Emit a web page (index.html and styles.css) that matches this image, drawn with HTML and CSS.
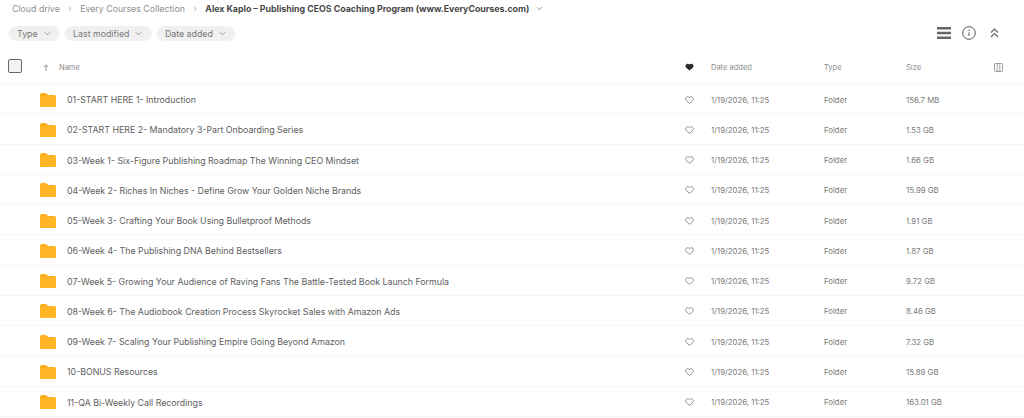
FILE: index.html
```html
<!DOCTYPE html>
<html lang="en">
<head>
    <meta charset="UTF-8">
    <meta name="viewport" content="width=device-width, initial-scale=1.0">
    <link rel="stylesheet" href="styles.css">
</head>
<body>
    <svg class="defs" width="0" height="0">
        <symbol id="folder" viewBox="0 0 16 14">
            <path d="M0 2C0 .9.8 0 1.800 0h3.600c.5 0 .9.200 1.200.5L8 2h6.200c1 0 1.800.8 1.800 1.800v8.400c0 1-.8 1.800-1.800 1.800H1.800C.8 14 0 13.200 0 12.200Z" fill="#fdb022"/>
            <path d="M0 4.500C0 3.700.7 3 1.500 3h13c.8 0 1.500.7 1.500 1.500v7.700c0 1-.8 1.800-1.800 1.800H1.800C.8 14 0 13.200 0 12.200Z" fill="#ffb524"/>
        </symbol>
        <symbol id="heart" viewBox="0 0 10 9">
            <path d="M5 8.300 1.500 5.300C.2 4.100.4 1.900 2 1.100 3.100.6 4.300.9 5 1.800c.7-.9 1.900-1.200 3-.7 1.600.8 1.800 3 .5 4.200Z" fill="none" stroke="#777" stroke-width=".9"/>
        </symbol>
        <symbol id="chev" viewBox="0 0 8 5">
            <path d="M1 1 4 4 7 1" fill="none" stroke="#888" stroke-width="1"/>
        </symbol>
    </svg>

    <nav class="crumbs">
        <a href="#">Cloud drive</a>
        <span class="sep">&#8250;</span>
        <a href="#">Every Courses Collection</a>
        <span class="sep">&#8250;</span>
        <b>Alex Kaplo &#8211; Publishing CEOS Coaching Program (www.EveryCourses.com)</b>
        <svg class="chev crumb-chev"><use href="#chev"/></svg>
    </nav>

    <div class="toolbar">
        <div class="chip">Type <svg class="chev"><use href="#chev"/></svg></div>
        <div class="chip">Last modified <svg class="chev"><use href="#chev"/></svg></div>
        <div class="chip">Date added <svg class="chev"><use href="#chev"/></svg></div>
        <div class="tools">
            <svg class="stack" width="14" height="12" viewBox="0 0 14 12">
                <path d="M0 1.300h14M0 6h14M0 10.700h14" stroke="#666" stroke-width="2.600"/>
            </svg>
            <svg class="info" width="14" height="14" viewBox="0 0 14 14">
                <circle cx="7" cy="7" r="6.300" fill="none" stroke="#555" stroke-width="1"/>
                <path d="M7 6.300v3.600" stroke="#555" stroke-width="1"/>
                <circle cx="7" cy="4.300" r=".7" fill="#555"/>
            </svg>
            <svg class="collapse" width="9" height="10" viewBox="0 0 9 10">
                <path d="M1 4.500 4.500 1 8 4.500M1 9 4.500 5.500 8 9" fill="none" stroke="#666" stroke-width="1.100"/>
            </svg>
        </div>
    </div>

    <div class="row head">
        <div class="check"></div>
        <svg class="arrow" width="6" height="7" viewBox="0 0 6 7"><path d="M3 7V1M.7 3.200 3 1l2.300 2.200" fill="none" stroke="#888" stroke-width=".9"/></svg>
        <div class="name">Name</div>
        <svg class="heart" viewBox="0 0 10 9"><path d="M5 8.500 1.300 5.300C0 4 .3 1.800 1.900 1 3 .5 4.300.8 5 1.700 5.700.8 7 .5 8.100 1c1.600.8 1.900 3 .6 4.300Z" fill="#2b2b2b"/></svg>
        <div>Date added</div>
        <div>Type</div>
        <div>Size</div>
        <svg class="cols" width="9" height="9" viewBox="0 0 9 9"><rect x=".5" y=".5" width="8" height="8" rx="1" fill="none" stroke="#888" stroke-width=".8"/><path d="M3.200.5v8M5.800.5v8" stroke="#888" stroke-width=".8"/></svg>
    </div>

    <div class="row"><svg class="folder"><use href="#folder"/></svg><div class="name">01-START HERE 1- Introduction</div><svg class="heart"><use href="#heart"/></svg><div>1/19/2026, 11:25</div><div>Folder</div><div>156.7 MB</div></div>
    <div class="row"><svg class="folder"><use href="#folder"/></svg><div class="name">02-START HERE 2- Mandatory 3-Part Onboarding Series</div><svg class="heart"><use href="#heart"/></svg><div>1/19/2026, 11:25</div><div>Folder</div><div>1.53 GB</div></div>
    <div class="row"><svg class="folder"><use href="#folder"/></svg><div class="name">03-Week 1- Six-Figure Publishing Roadmap The Winning CEO Mindset</div><svg class="heart"><use href="#heart"/></svg><div>1/19/2026, 11:25</div><div>Folder</div><div>1.66 GB</div></div>
    <div class="row"><svg class="folder"><use href="#folder"/></svg><div class="name">04-Week 2- Riches In Niches - Define Grow Your Golden Niche Brands</div><svg class="heart"><use href="#heart"/></svg><div>1/19/2026, 11:25</div><div>Folder</div><div>15.99 GB</div></div>
    <div class="row"><svg class="folder"><use href="#folder"/></svg><div class="name">05-Week 3- Crafting Your Book Using Bulletproof Methods</div><svg class="heart"><use href="#heart"/></svg><div>1/19/2026, 11:25</div><div>Folder</div><div>1.91 GB</div></div>
    <div class="row"><svg class="folder"><use href="#folder"/></svg><div class="name">06-Week 4- The Publishing DNA Behind Bestsellers</div><svg class="heart"><use href="#heart"/></svg><div>1/19/2026, 11:25</div><div>Folder</div><div>1.87 GB</div></div>
    <div class="row"><svg class="folder"><use href="#folder"/></svg><div class="name">07-Week 5- Growing Your Audience of Raving Fans The Battle-Tested Book Launch Formula</div><svg class="heart"><use href="#heart"/></svg><div>1/19/2026, 11:25</div><div>Folder</div><div>9.72 GB</div></div>
    <div class="row"><svg class="folder"><use href="#folder"/></svg><div class="name">08-Week 6- The Audiobook Creation Process Skyrocket Sales with Amazon Ads</div><svg class="heart"><use href="#heart"/></svg><div>1/19/2026, 11:25</div><div>Folder</div><div>8.46 GB</div></div>
    <div class="row"><svg class="folder"><use href="#folder"/></svg><div class="name">09-Week 7- Scaling Your Publishing Empire Going Beyond Amazon</div><svg class="heart"><use href="#heart"/></svg><div>1/19/2026, 11:25</div><div>Folder</div><div>7.32 GB</div></div>
    <div class="row"><svg class="folder"><use href="#folder"/></svg><div class="name">10-BONUS Resources</div><svg class="heart"><use href="#heart"/></svg><div>1/19/2026, 11:25</div><div>Folder</div><div>15.89 GB</div></div>
    <div class="row"><svg class="folder"><use href="#folder"/></svg><div class="name">11-QA Bi-Weekly Call Recordings</div><svg class="heart"><use href="#heart"/></svg><div>1/19/2026, 11:25</div><div>Folder</div><div>163.01 GB</div></div>
</body>
</html>
```

FILE: styles.css
```css
body {
    margin: 0;
    height: 418px;
    overflow: hidden;
    background-color: #ffffff;
    color: #7a7a7a;
    font-family: Inter, 'Noto Sans', sans-serif;
    font-size: 7.800px;
}

.defs {
    display: block;
}

.crumbs {
    display: flex;
    align-items: center;
    height: 17px;
    padding-left: 12px;
    font-size: 8.800px;
}

.crumbs a {
    color: #8f8f8f;
    text-decoration: none;
}

.crumbs b {
    color: #484848;
    font-weight: 700;
}

.sep {
    margin: 0 8.500px;
    color: #b0b0b0;
}

.chev {
    width: 7px;
    height: 5px;
}

.crumb-chev {
    margin-left: 7px;
}

.toolbar {
    display: flex;
    align-items: center;
    gap: 5px;
    height: 32px;
    padding: 0 25px 0 9px;
}

.chip {
    display: flex;
    align-items: center;
    gap: 6px;
    height: 15px;
    padding: 0 9.500px 0 8px;
    border-radius: 8px;
    background-color: #f0f0f0;
    color: #777777;
    font-size: 8.800px;
}

.tools {
    display: flex;
    align-items: center;
    margin-left: auto;
}

.info {
    margin: 0 14px 0 11px;
}

.row {
    display: grid;
    grid-template-columns: 16px 629px 26px 113px 82px 118px;
    align-items: center;
    box-sizing: border-box;
    height: 30.250px;
    padding: 2px 0 0 40px;
    border-bottom: 1px solid #f6f6f6;
}

.head {
    position: relative;
    height: 35px;
    padding-left: 43px;
    color: #8a8a8a;
    font-size: 7.500px;
    grid-template-columns: 16px 626px 26px 113px 82px 88px 9px;
}

.folder {
    width: 16px;
    height: 14px;
}

.name {
    padding-left: 11px;
    color: #606060;
    font-size: 8.800px;
    white-space: nowrap;
}

.head .name {
    padding-left: 0;
    color: #8a8a8a;
    font-size: 7.500px;
}

.heart {
    width: 9px;
    height: 8px;
}

.check {
    position: absolute;
    left: 8px;
    top: 10px;
    box-sizing: border-box;
    width: 14px;
    height: 14px;
    border: 1px solid #666666;
    border-radius: 2px;
    background-color: #f3f3f3;
}
```
